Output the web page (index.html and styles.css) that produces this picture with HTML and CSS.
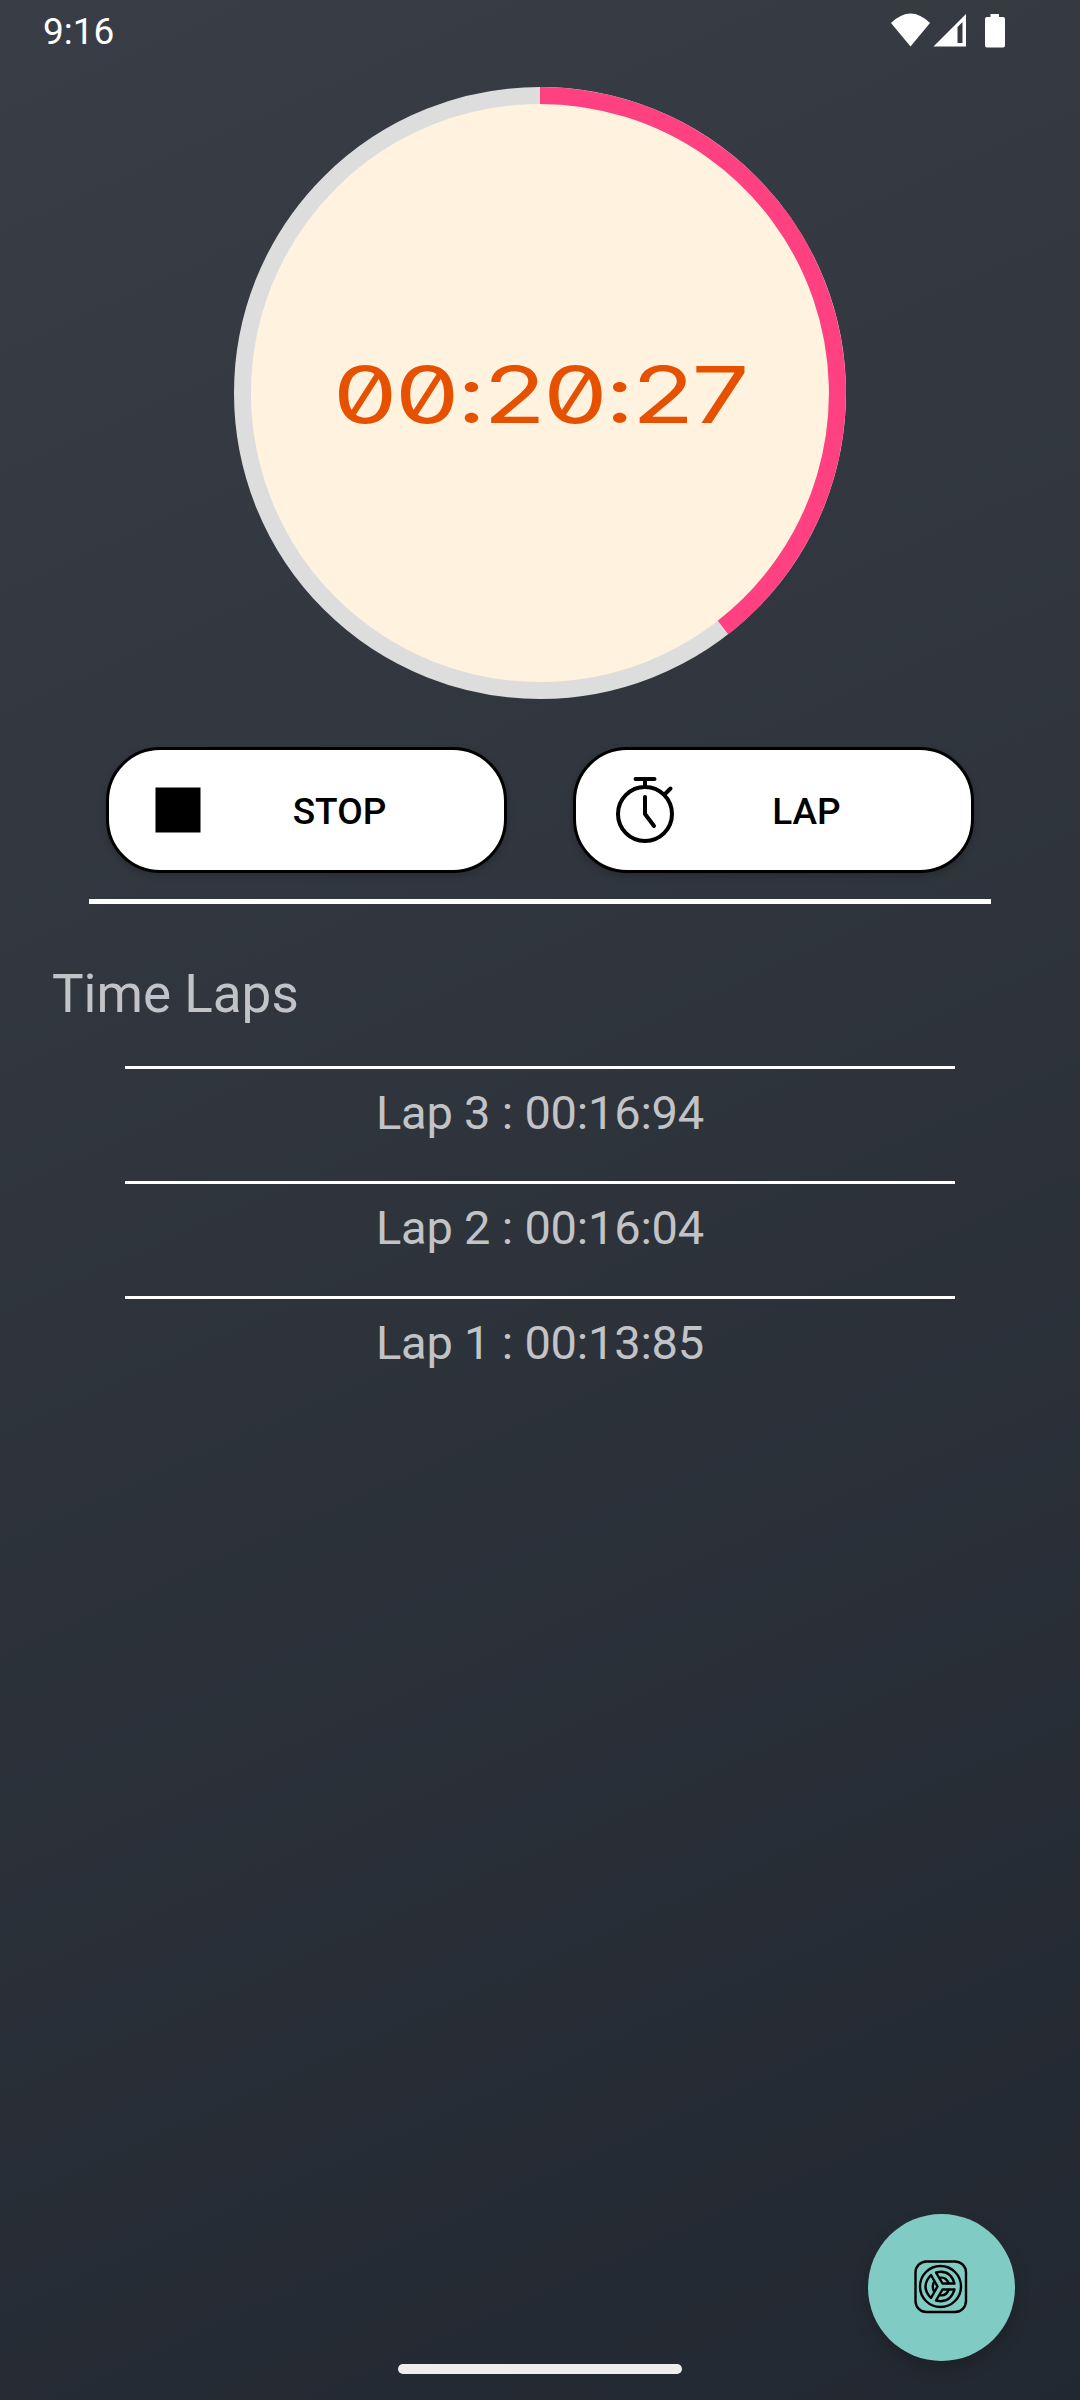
FILE: index.html
```html
<!DOCTYPE html>
<html lang="en">
<head>
<meta charset="utf-8">
<title>Stopwatch</title>
<link rel="stylesheet" href="styles.css">
</head>
<body>
<main class="screen">
  <header class="status">
    <span class="status-time">9:16</span>
    <svg class="status-icons" width="116" height="36" viewBox="0 0 116 36" fill="#fff">
      <path d="M0 10Q19.500-9 39 10L19.500 33.500Z"/>
      <path fill-rule="evenodd" d="M42.500 33.500L75 1V33.500ZM66.500 14V30H71.500V9Z"/>
      <path d="M99.500 1H108V4H112Q114 4 114 6V32.500Q114 34.500 112 34.500H96Q94 34.500 94 32.500V6Q94 4 96 4H99.500Z"/>
    </svg>
  </header>

  <section class="dial">
    <svg class="ring" viewBox="0 0 612 612" fill="none" stroke-width="17">
      <circle cx="306" cy="306" r="297.500" fill="#fff3e0" stroke="#ddd"/>
      <path d="M306 8.500A297.500 297.500 0 0 1 489 540.500" stroke="#ff4081"/>
    </svg>
    <div class="time">00:20:27</div>
  </section>

  <div class="actions">
    <button class="btn">
      <svg class="btn-icon" width="60" height="70" viewBox="0 0 60 70"><path d="M8.500 12.500h45v45h-45z"/></svg>
      <span class="btn-label">STOP</span>
    </button>
    <button class="btn">
      <svg class="btn-icon" width="60" height="70" viewBox="0 0 60 70" fill="none" stroke="#000" stroke-width="4" stroke-linecap="round" stroke-linejoin="round">
        <circle cx="31" cy="39" r="27"/>
        <path d="M21.500 4H40.500M31 4V12M51 19L56.500 13.500M31 22V39L40 51"/>
      </svg>
      <span class="btn-label">LAP</span>
    </button>
  </div>

  <section class="laps">
    <h1 class="laps-title">Time Laps</h1>
    <ol class="laps-list">
      <li class="lap">Lap 3 : 00:16:94</li>
      <li class="lap">Lap 2 : 00:16:04</li>
      <li class="lap">Lap 1 : 00:13:85</li>
    </ol>
  </section>

  <footer class="bottom">
    <button class="fab">
      <svg width="54" height="54" viewBox="0 0 54 54" fill="none" stroke="#000" stroke-width="2.400" stroke-linejoin="round">
        <rect x="1.500" y="1.500" width="50.500" height="50.500" rx="11"/>
        <circle cx="26.500" cy="26.500" r="20.500"/>
        <path d="M22 12.500Q36 9 40.500 23.500H28.500Z"/>
        <path d="M22 40.500Q36 44 40.500 29.500H28.500Z"/>
        <path d="M17 15Q6 26.500 17 38L23.500 26.500Z"/>
        <path d="M25 18Q32 16 35 24M25 35Q32 37 35 29M20.500 21Q17 26.500 20.500 32"/>
      </svg>
    </button>
    <div class="home"></div>
  </footer>
</main>
</body>
</html>
```
FILE: styles.css
```css
* { box-sizing: border-box; }
body { margin: 0; font-family: Roboto, sans-serif; }
.screen {
  width: 1080px;
  height: 2400px;
  display: flex;
  flex-direction: column;
  background: linear-gradient(155.8deg, #393e46, #222831);
}
.status {
  height: 87px;
  padding: 9px 73px 0 43px;
  display: flex;
  justify-content: space-between;
  align-items: flex-start;
  color: #fff;
}
.status-time { font-size: 37px; line-height: 46px; }
.status-icons { margin-top: 4px; }
.dial {
  width: 612px;
  height: 612px;
  margin: 0 auto;
  display: grid;
  place-items: center;
}
.ring, .time { grid-area: 1 / 1; }
.ring { width: 612px; height: 612px; }
.time {
  padding-top: 4px;
  font: 400 78px/80px Inter, sans-serif;
  font-feature-settings: "zero", "calt" 0;
  letter-spacing: -2px;
  color: #e65100;
  white-space: nowrap;
  transform: scaleX(1.31);
  z-index: 1;
}
.actions {
  width: 902px;
  height: 205px;
  margin: 0 auto;
  padding: 48px 17px 0;
  display: flex;
  justify-content: space-between;
  border-bottom: 5px solid #fff;
}
.btn {
  width: 401px;
  height: 126px;
  padding: 0 37px 0 38px;
  display: flex;
  align-items: center;
  border: 3px solid #000;
  border-radius: 54px;
  background: #fff;
  color: #000;
  box-shadow: 0 3px 7px rgba(0, 0, 0, .18);
}
.btn-icon { flex: none; }
.btn-label { flex: 1; padding: 3px 0 0 5px; text-align: center; font: 500 37px/44px Roboto, sans-serif; }
.laps-title {
  margin: 59px 0 0 52px;
  font-size: 53px;
  line-height: 62px;
  font-weight: 400;
  color: #c2c3c6;
}
.laps-list {
  width: 830px;
  margin: 41px auto 0;
  padding: 0;
  list-style: none;
}
.lap {
  height: 115px;
  padding-top: 16px;
  border-top: 3px solid #fff;
  font-size: 47px;
  line-height: 56px;
  letter-spacing: -.2px;
  text-align: center;
  color: #c2c3c6;
}
.bottom {
  margin-top: auto;
  padding-bottom: 26px;
  display: flex;
  flex-direction: column;
  align-items: center;
}
.fab {
  width: 147px;
  height: 147px;
  margin: 0 65px 3px 0;
  padding: 0 1px 1px 0;
  display: grid;
  place-items: center;
  align-self: flex-end;
  border: 0;
  border-radius: 50%;
  background: #80cbc4;
  box-shadow: 0 8px 16px rgba(0, 0, 0, .18);
}
.home { width: 284px; height: 10px; border-radius: 5px; background: #eee; }
```
